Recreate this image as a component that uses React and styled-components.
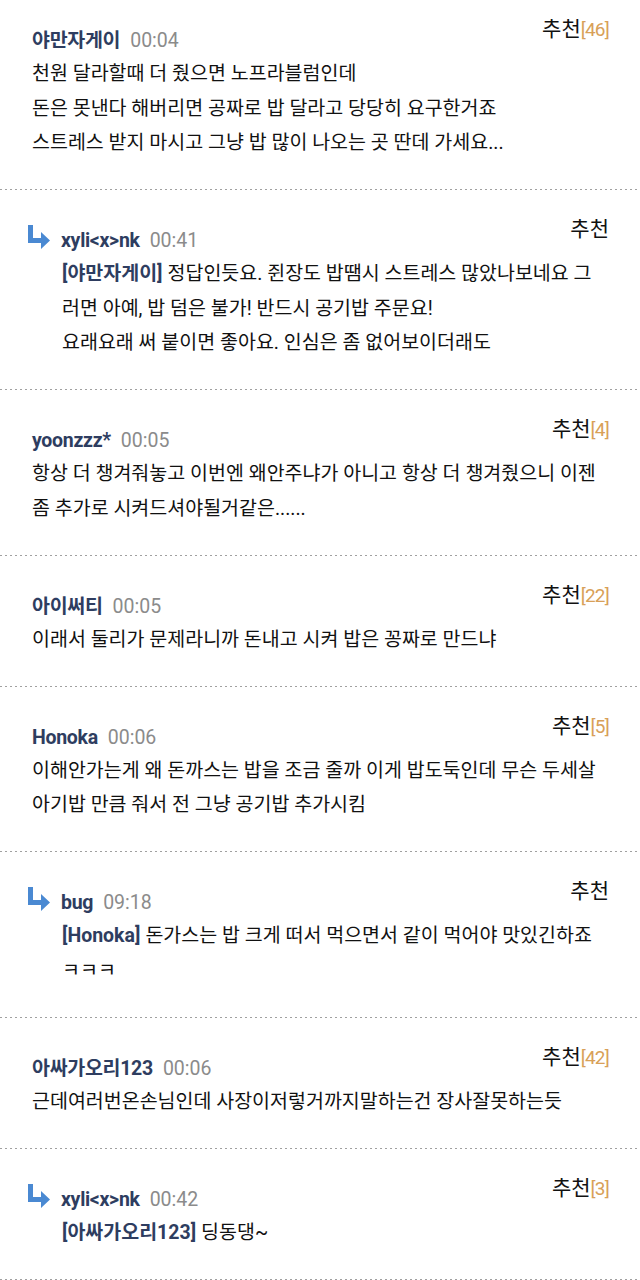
import React from 'react'
import styled, { createGlobalStyle } from 'styled-components'

const GlobalStyle = createGlobalStyle`
    html, body {
        margin: 0;
        padding: 0;
        background: #ffffff;
    }
    body {
        font-family: Roboto, "Noto Sans CJK KR", sans-serif;
        color: #111111;
    }
`

const List = styled.div`
    width: 640px;
    display: flex;
    flex-direction: column;
`

// dotted separator is drawn as a repeating background at the bottom edge
const Item = styled.div`
    padding: ${props => (props.first ? '17px' : '26px')} 31px 29.5px 32px;
    border-bottom: 1px solid transparent;
    background: linear-gradient(to right, #a0a0a0 0 2px, transparent 2px) left bottom / 5px 1px repeat-x;
`

const Head = styled.div`
    display: flex;
    justify-content: space-between;
    align-items: flex-start;
    height: 36px;
`

const Who = styled.div`
    display: flex;
    align-items: center;
    margin-top: 12px;
    height: 24px;
    margin-left: ${props => (props.reply ? '-5px' : '0')};
`

const Arrow = styled.svg`
    width: 24px;
    height: 25px;
    margin-right: 10px;
    margin-top: -7px;
    flex-shrink: 0;
`

const Nick = styled.span`
    font-size: 19.5px;
    font-weight: 700;
    color: #2e3d60;
    line-height: 24px;
    letter-spacing: -0.3px;
`

const Time = styled.span`
    font-size: 19.5px;
    color: #8b8b8b;
    margin-left: 10px;
    line-height: 24px;
`

const Recommend = styled.div`
    font-size: 21px;
    line-height: 24px;
    color: #111111;
    white-space: nowrap;
`

const Count = styled.span`
    font-size: 19px;
    color: #d8a058;
    letter-spacing: -0.8px;
`

const Body = styled.div`
    margin-top: 4px;
    padding-left: ${props => (props.reply ? '30px' : '0')};
    font-size: 19.5px;
    line-height: 34.5px;
`

const Line = styled.div`
    white-space: nowrap;
    height: 34.5px;
`

const Mention = styled.span`
    color: #2e3d60;
    font-weight: 700;
    margin-right: 5px;
`

const comments = [
    {
        nick: '야만자게이', time: '00:04', likes: 46,
        lines: ['천원 달라할때 더 줬으면 노프라블럼인데', '돈은 못낸다 해버리면 공짜로 밥 달라고 당당히 요구한거죠', '스트레스 받지 마시고 그냥 밥 많이 나오는 곳 딴데 가세요...'],
    },
    {
        reply: true, nick: 'xyli<x>nk', time: '00:41', mention: '야만자게이',
        lines: ['정답인듯요. 쥔장도 밥땜시 스트레스 많았나보네요 그', '러면 아예, 밥 덤은 불가! 반드시 공기밥 주문요!', '요래요래 써 붙이면 좋아요. 인심은 좀 없어보이더래도'],
    },
    {
        nick: 'yoonzzz*', time: '00:05', likes: 4,
        lines: ['항상 더 챙겨줘놓고 이번엔 왜안주냐가 아니고 항상 더 챙겨줬으니 이젠', '좀 추가로 시켜드셔야될거같은......'],
    },
    {
        nick: '아이써티', time: '00:05', likes: 22,
        lines: ['이래서 둘리가 문제라니까 돈내고 시켜 밥은 꽁짜로 만드냐'],
    },
    {
        nick: 'Honoka', time: '00:06', likes: 5,
        lines: ['이해안가는게 왜 돈까스는 밥을 조금 줄까 이게 밥도둑인데 무슨 두세살', '아기밥 만큼 줘서 전 그냥 공기밥 추가시킴'],
    },
    {
        reply: true, nick: 'bug', time: '09:18', mention: 'Honoka',
        lines: ['돈가스는 밥 크게 떠서 먹으면서 같이 먹어야 맛있긴하죠', 'ㅋㅋㅋ'],
    },
    {
        nick: '아싸가오리123', time: '00:06', likes: 42,
        lines: ['근데여러번온손님인데 사장이저렇거까지말하는건 장사잘못하는듯'],
    },
    {
        reply: true, nick: 'xyli<x>nk', time: '00:42', likes: 3, mention: '아싸가오리123',
        lines: ['딩동댕~'],
    },
]

const ReplyArrow = () => (
    <Arrow viewBox="0 0 24 25">
        <path d="M1 0 H6 V13 H14 V7 L23 15.5 L14 24 V18 H1 Z" fill="#4a89d2" />
    </Arrow>
)

const Comment = ({ c, first }) => (
    <Item first={first}>
        <Head>
            <Who reply={c.reply}>
                {c.reply && <ReplyArrow />}
                <Nick>{c.nick}</Nick>
                <Time>{c.time}</Time>
            </Who>
            <Recommend>
                추천{c.likes ? <Count>[{c.likes}]</Count> : null}
            </Recommend>
        </Head>
        <Body reply={c.reply}>
            {c.lines.map((l, i) => (
                <Line key={i}>
                    {i === 0 && c.mention && <Mention>[{c.mention}]</Mention>}
                    {l}
                </Line>
            ))}
        </Body>
    </Item>
)

export default function App() {
    return (
        <>
            <GlobalStyle />
            <List>
                {comments.map((c, i) => (
                    <Comment key={i} c={c} first={i === 0} />
                ))}
            </List>
        </>
    )
}
